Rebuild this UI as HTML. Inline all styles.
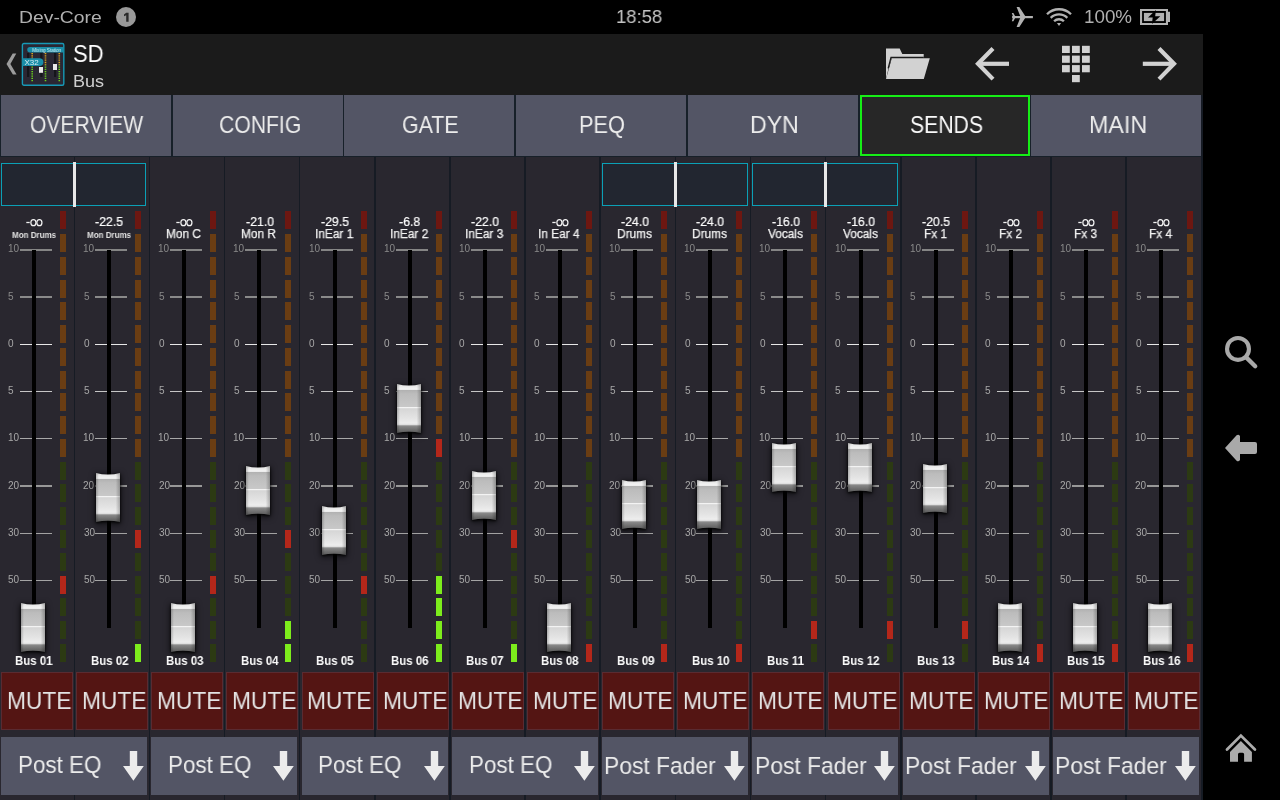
<!DOCTYPE html>
<html><head><meta charset="utf-8"><title>SD Bus Sends</title>
<style>
*{margin:0;padding:0;box-sizing:border-box}
html,body{width:1280px;height:800px;overflow:hidden;background:#000}
body{position:relative;font-family:"Liberation Sans",sans-serif;color:#fff}
.abs{position:absolute}
.t{position:absolute;white-space:nowrap;line-height:1;transform-origin:0 0;will-change:transform}
.tab{position:absolute;top:95px;height:61px;background:#535565}
.sep{position:absolute;width:1.5px;background:#161b24}
.seg{position:absolute;width:6px;height:18px}
.tick{position:absolute;height:1.4px}
.track{position:absolute;width:4px;background:#000}
.knob{position:absolute;width:30px;height:56px}
.mute{position:absolute;top:672px;height:58px;width:72px;background:#541513;box-shadow:inset 0 0 0 1px #5a2b31}
.post{position:absolute;top:737px;height:58px;width:146px;background:#535565}
.pan{position:absolute;top:162.6px;height:43.8px;border:1.7px solid #0ba0b6;background:#222630}
.panbar{position:absolute;top:162px;height:45px;width:3px;background:#e8e8e8}
svg{position:absolute;overflow:visible}
.kn{filter:drop-shadow(0 1px 1px rgba(0,0,0,0.9)) drop-shadow(0 1px 3px rgba(0,0,0,0.85))}
</style></head><body>
<svg width="0" height="0" style="position:absolute;left:0;top:0"><defs>
<linearGradient id="kg" x1="0" y1="0" x2="0" y2="1">
<stop offset="0" stop-color="#cfcfcf"/><stop offset="0.05" stop-color="#eaeaea"/><stop offset="0.11" stop-color="#f4f4f4"/>
<stop offset="0.13" stop-color="#b2b2b2"/><stop offset="0.2" stop-color="#bcbcbc"/><stop offset="0.46" stop-color="#c8c8c8"/>
<stop offset="0.48" stop-color="#f4f4f4"/><stop offset="0.505" stop-color="#d6d6d6"/>
<stop offset="0.7" stop-color="#e4e4e4"/><stop offset="0.8" stop-color="#ededed"/><stop offset="0.83" stop-color="#dedede"/><stop offset="0.855" stop-color="#8a8a8a"/>
<stop offset="0.93" stop-color="#707070"/><stop offset="1" stop-color="#5a5a5a"/></linearGradient>
<linearGradient id="kh" x1="0" y1="0" x2="1" y2="0">
<stop offset="0" stop-color="#000" stop-opacity="0.22"/><stop offset="0.12" stop-color="#000" stop-opacity="0"/>
<stop offset="0.82" stop-color="#000" stop-opacity="0"/><stop offset="1" stop-color="#000" stop-opacity="0.25"/></linearGradient>
<g id="knob"><path d="M0 0Q12 3 24 0V49Q12 46.5 0 49Z" fill="url(#kg)"/><path d="M0 0Q12 3 24 0V49Q12 46.5 0 49Z" fill="url(#kh)"/></g>
</defs></svg>

<div class="abs" style="left:0;top:0;width:1280px;height:34px;background:#000"></div>
<div class="t" style="left:19.01px;top:8.85px;font-size:17.19px;color:#b0b0b0;transform:scaleX(1.1263);">Dev-Core</div>
<div class="abs" style="left:116px;top:7px;width:20px;height:20px;border-radius:50%;background:#999"></div>
<svg style="left:0;top:0" width="140" height="30" viewBox="0 0 140 30"><path d="M126.2 12.7H128.6V21.7H126.2V15.3L124 16.3V14.6Z" fill="#2a2a2a"/></svg>
<div class="t" style="left:616.10px;top:6.87px;font-size:19.05px;color:#c4c4c4;transform:scaleX(0.9694);">18:58</div>
<div class="t" style="left:1083.57px;top:8.10px;font-size:18.19px;color:#b0b0b0;transform:scaleX(1.0336);">100%</div>
<div class="abs" style="left:0;top:34px;width:1203px;height:61px;background:#1b1b1b"></div>
<div class="t" style="left:73.38px;top:42.83px;font-size:23.35px;color:#fff;transform:scaleX(0.9450);">SD</div>
<div class="t" style="left:72.52px;top:73.42px;font-size:16.28px;color:#d0d0d0;transform:scaleX(1.1092);">Bus</div>
<div class="abs" style="left:0;top:95px;width:1203px;height:62px;background:#172029"></div>
<div class="tab" style="left:1px;width:170px"></div>
<div class="t" style="left:30.49px;top:112.97px;font-size:23.78px;color:#ececec;transform:scaleX(0.8860);">OVERVIEW</div>
<div class="tab" style="left:173px;width:170px"></div>
<div class="t" style="left:218.64px;top:112.97px;font-size:23.78px;color:#ececec;transform:scaleX(0.8903);">CONFIG</div>
<div class="tab" style="left:344px;width:170px"></div>
<div class="t" style="left:401.53px;top:112.97px;font-size:23.78px;color:#ececec;transform:scaleX(0.8999);">GATE</div>
<div class="tab" style="left:516px;width:170px"></div>
<div class="t" style="left:578.92px;top:112.97px;font-size:23.78px;color:#ececec;transform:scaleX(0.9150);">PEQ</div>
<div class="tab" style="left:688px;width:170px"></div>
<div class="t" style="left:750.11px;top:112.68px;font-size:24.13px;color:#ececec;transform:scaleX(0.9574);">DYN</div>
<div class="tab" style="left:860px;width:170px;background:#272727;border:2px solid #16ee16"></div>
<div class="t" style="left:909.92px;top:113.17px;font-size:23.78px;color:#fafafa;transform:scaleX(0.8926);">SENDS</div>
<div class="tab" style="left:1031px;width:170px"></div>
<div class="t" style="left:1088.59px;top:112.68px;font-size:24.13px;color:#ececec;transform:scaleX(0.9634);">MAIN</div>
<div class="abs" style="left:0;top:157px;width:1201px;height:643px;background:#29272f"></div>
<div class="abs" style="left:1201px;top:95px;width:2px;height:705px;background:#161b24"></div>
<div class="sep" style="left:73.50px;top:157px;height:580px"></div>
<div class="sep" style="left:73.50px;top:795px;height:5px"></div>
<div class="seg" style="left:60.00px;top:211.20px;background:#6d1711"></div>
<div class="seg" style="left:60.00px;top:233.97px;background:#6a3d13"></div>
<div class="seg" style="left:60.00px;top:256.74px;background:#6a3d13"></div>
<div class="seg" style="left:60.00px;top:279.51px;background:#6a3d13"></div>
<div class="seg" style="left:60.00px;top:302.28px;background:#6a3d13"></div>
<div class="seg" style="left:60.00px;top:325.05px;background:#6a3d13"></div>
<div class="seg" style="left:60.00px;top:347.82px;background:#6a3d13"></div>
<div class="seg" style="left:60.00px;top:370.59px;background:#6a3d13"></div>
<div class="seg" style="left:60.00px;top:393.36px;background:#6a3d13"></div>
<div class="seg" style="left:60.00px;top:416.13px;background:#6a3d13"></div>
<div class="seg" style="left:60.00px;top:438.90px;background:#6a3d13"></div>
<div class="seg" style="left:60.00px;top:461.67px;background:#2c3a13"></div>
<div class="seg" style="left:60.00px;top:484.44px;background:#2c3a13"></div>
<div class="seg" style="left:60.00px;top:507.21px;background:#2c3a13"></div>
<div class="seg" style="left:60.00px;top:529.98px;background:#2c3a13"></div>
<div class="seg" style="left:60.00px;top:552.75px;background:#2c3a13"></div>
<div class="seg" style="left:60.00px;top:575.52px;background:#b4271a"></div>
<div class="seg" style="left:60.00px;top:598.29px;background:#2c3a13"></div>
<div class="seg" style="left:60.00px;top:621.06px;background:#2c3a13"></div>
<div class="seg" style="left:60.00px;top:643.83px;background:#2c3a13"></div>
<div class="tick" style="left:20.00px;top:249.20px;width:32px;background:#858585"></div>
<div class="t" style="left:8.05px;top:244.34px;font-size:10.00px;color:#8a8a8a;transform:scaleX(0.9850);">10</div>
<div class="tick" style="left:20.00px;top:296.40px;width:32px;background:#8a8a8a"></div>
<div class="t" style="left:8.41px;top:291.54px;font-size:10.00px;color:#8a8a8a;transform:scaleX(0.9850);">5</div>
<div class="tick" style="left:20.00px;top:343.70px;width:32px;background:#e8e8e8"></div>
<div class="t" style="left:8.43px;top:338.83px;font-size:10.00px;color:#a8a8a8;transform:scaleX(0.9850);">0</div>
<div class="tick" style="left:20.00px;top:390.90px;width:32px;background:#c6c6c6"></div>
<div class="t" style="left:8.41px;top:386.04px;font-size:10.00px;color:#a8a8a8;transform:scaleX(0.9850);">5</div>
<div class="tick" style="left:20.00px;top:438.10px;width:32px;background:#a8a8a8"></div>
<div class="t" style="left:8.05px;top:433.24px;font-size:10.00px;color:#a8a8a8;transform:scaleX(0.9850);">10</div>
<div class="tick" style="left:20.00px;top:485.40px;width:32px;background:#989898"></div>
<div class="t" style="left:8.31px;top:480.54px;font-size:10.00px;color:#a8a8a8;transform:scaleX(0.9850);">20</div>
<div class="tick" style="left:20.00px;top:532.60px;width:32px;background:#a2a2a2"></div>
<div class="t" style="left:8.43px;top:527.73px;font-size:10.00px;color:#a8a8a8;transform:scaleX(0.9850);">30</div>
<div class="tick" style="left:20.00px;top:579.80px;width:32px;background:#a4a4a4"></div>
<div class="t" style="left:8.41px;top:574.93px;font-size:10.00px;color:#a8a8a8;transform:scaleX(0.9850);">50</div>
<div class="track" style="left:32.00px;top:250px;height:378px"></div>
<svg class="kn" style="left:21.00px;top:603.00px" width="24" height="49"><use href="#knob"/></svg>
<svg style="left:24.20px;top:216px" width="20" height="12" viewBox="0 0 20 12"><rect x="2.3" y="5.85" width="3.4" height="1.3" fill="#f0f0f0"/><ellipse cx="9.4" cy="6.65" rx="2.55" ry="3.05" fill="none" stroke="#f4f4f4" stroke-width="1.2"/><ellipse cx="15.4" cy="6.65" rx="2.55" ry="3.05" fill="none" stroke="#f4f4f4" stroke-width="1.2"/></svg>
<div class="t" style="left:12.02px;top:231.19px;font-size:8.87px;color:#e0e0e0;font-weight:bold;transform:scaleX(0.9050);">Mon Drums</div>
<div class="t" style="left:15.39px;top:654.96px;font-size:12.80px;color:#fafafa;font-weight:bold;transform:scaleX(0.8950);">Bus 01</div>
<div class="mute" style="left:1.00px"></div>
<div class="t" style="left:6.88px;top:688.58px;font-size:24.13px;color:#e4e4e4;transform:scaleX(0.9435);">MUTE</div>
<div class="sep" style="left:148.64px;top:157px;height:643px"></div>
<div class="seg" style="left:135.14px;top:211.20px;background:#6d1711"></div>
<div class="seg" style="left:135.14px;top:233.97px;background:#6a3d13"></div>
<div class="seg" style="left:135.14px;top:256.74px;background:#6a3d13"></div>
<div class="seg" style="left:135.14px;top:279.51px;background:#6a3d13"></div>
<div class="seg" style="left:135.14px;top:302.28px;background:#6a3d13"></div>
<div class="seg" style="left:135.14px;top:325.05px;background:#6a3d13"></div>
<div class="seg" style="left:135.14px;top:347.82px;background:#6a3d13"></div>
<div class="seg" style="left:135.14px;top:370.59px;background:#6a3d13"></div>
<div class="seg" style="left:135.14px;top:393.36px;background:#6a3d13"></div>
<div class="seg" style="left:135.14px;top:416.13px;background:#6a3d13"></div>
<div class="seg" style="left:135.14px;top:438.90px;background:#6a3d13"></div>
<div class="seg" style="left:135.14px;top:461.67px;background:#2c3a13"></div>
<div class="seg" style="left:135.14px;top:484.44px;background:#2c3a13"></div>
<div class="seg" style="left:135.14px;top:507.21px;background:#2c3a13"></div>
<div class="seg" style="left:135.14px;top:529.98px;background:#b4271a"></div>
<div class="seg" style="left:135.14px;top:552.75px;background:#2c3a13"></div>
<div class="seg" style="left:135.14px;top:575.52px;background:#2c3a13"></div>
<div class="seg" style="left:135.14px;top:598.29px;background:#2c3a13"></div>
<div class="seg" style="left:135.14px;top:621.06px;background:#2c3a13"></div>
<div class="seg" style="left:135.14px;top:643.83px;background:#7ded1c"></div>
<div class="tick" style="left:95.14px;top:249.20px;width:32px;background:#858585"></div>
<div class="t" style="left:83.19px;top:244.34px;font-size:10.00px;color:#8a8a8a;transform:scaleX(0.9850);">10</div>
<div class="tick" style="left:95.14px;top:296.40px;width:32px;background:#8a8a8a"></div>
<div class="t" style="left:83.55px;top:291.54px;font-size:10.00px;color:#8a8a8a;transform:scaleX(0.9850);">5</div>
<div class="tick" style="left:95.14px;top:343.70px;width:32px;background:#e8e8e8"></div>
<div class="t" style="left:83.57px;top:338.83px;font-size:10.00px;color:#a8a8a8;transform:scaleX(0.9850);">0</div>
<div class="tick" style="left:95.14px;top:390.90px;width:32px;background:#c6c6c6"></div>
<div class="t" style="left:83.55px;top:386.04px;font-size:10.00px;color:#a8a8a8;transform:scaleX(0.9850);">5</div>
<div class="tick" style="left:95.14px;top:438.10px;width:32px;background:#a8a8a8"></div>
<div class="t" style="left:83.19px;top:433.24px;font-size:10.00px;color:#a8a8a8;transform:scaleX(0.9850);">10</div>
<div class="tick" style="left:95.14px;top:485.40px;width:32px;background:#989898"></div>
<div class="t" style="left:83.45px;top:480.54px;font-size:10.00px;color:#a8a8a8;transform:scaleX(0.9850);">20</div>
<div class="tick" style="left:95.14px;top:532.60px;width:32px;background:#a2a2a2"></div>
<div class="t" style="left:83.57px;top:527.73px;font-size:10.00px;color:#a8a8a8;transform:scaleX(0.9850);">30</div>
<div class="tick" style="left:95.14px;top:579.80px;width:32px;background:#a4a4a4"></div>
<div class="t" style="left:83.55px;top:574.93px;font-size:10.00px;color:#a8a8a8;transform:scaleX(0.9850);">50</div>
<div class="track" style="left:107.14px;top:250px;height:378px"></div>
<svg class="kn" style="left:96.14px;top:473.40px" width="24" height="49"><use href="#knob"/></svg>
<div class="t" style="left:95.29px;top:215.52px;font-size:12.50px;color:#fff;transform:scaleX(0.9850);-webkit-text-stroke:0.2px #fff;">-22.5</div>
<div class="t" style="left:87.16px;top:231.19px;font-size:8.87px;color:#e0e0e0;font-weight:bold;transform:scaleX(0.9050);">Mon Drums</div>
<div class="t" style="left:90.60px;top:654.96px;font-size:12.80px;color:#fafafa;font-weight:bold;transform:scaleX(0.8950);">Bus 02</div>
<div class="mute" style="left:76.14px"></div>
<div class="t" style="left:82.02px;top:688.58px;font-size:24.13px;color:#e4e4e4;transform:scaleX(0.9435);">MUTE</div>
<div class="sep" style="left:223.78px;top:157px;height:580px"></div>
<div class="sep" style="left:223.78px;top:795px;height:5px"></div>
<div class="seg" style="left:210.28px;top:211.20px;background:#6d1711"></div>
<div class="seg" style="left:210.28px;top:233.97px;background:#6a3d13"></div>
<div class="seg" style="left:210.28px;top:256.74px;background:#6a3d13"></div>
<div class="seg" style="left:210.28px;top:279.51px;background:#6a3d13"></div>
<div class="seg" style="left:210.28px;top:302.28px;background:#6a3d13"></div>
<div class="seg" style="left:210.28px;top:325.05px;background:#6a3d13"></div>
<div class="seg" style="left:210.28px;top:347.82px;background:#6a3d13"></div>
<div class="seg" style="left:210.28px;top:370.59px;background:#6a3d13"></div>
<div class="seg" style="left:210.28px;top:393.36px;background:#6a3d13"></div>
<div class="seg" style="left:210.28px;top:416.13px;background:#6a3d13"></div>
<div class="seg" style="left:210.28px;top:438.90px;background:#6a3d13"></div>
<div class="seg" style="left:210.28px;top:461.67px;background:#2c3a13"></div>
<div class="seg" style="left:210.28px;top:484.44px;background:#2c3a13"></div>
<div class="seg" style="left:210.28px;top:507.21px;background:#2c3a13"></div>
<div class="seg" style="left:210.28px;top:529.98px;background:#2c3a13"></div>
<div class="seg" style="left:210.28px;top:552.75px;background:#2c3a13"></div>
<div class="seg" style="left:210.28px;top:575.52px;background:#b4271a"></div>
<div class="seg" style="left:210.28px;top:598.29px;background:#2c3a13"></div>
<div class="seg" style="left:210.28px;top:621.06px;background:#2c3a13"></div>
<div class="seg" style="left:210.28px;top:643.83px;background:#2c3a13"></div>
<div class="tick" style="left:170.28px;top:249.20px;width:32px;background:#858585"></div>
<div class="t" style="left:158.33px;top:244.34px;font-size:10.00px;color:#8a8a8a;transform:scaleX(0.9850);">10</div>
<div class="tick" style="left:170.28px;top:296.40px;width:32px;background:#8a8a8a"></div>
<div class="t" style="left:158.69px;top:291.54px;font-size:10.00px;color:#8a8a8a;transform:scaleX(0.9850);">5</div>
<div class="tick" style="left:170.28px;top:343.70px;width:32px;background:#e8e8e8"></div>
<div class="t" style="left:158.71px;top:338.83px;font-size:10.00px;color:#a8a8a8;transform:scaleX(0.9850);">0</div>
<div class="tick" style="left:170.28px;top:390.90px;width:32px;background:#c6c6c6"></div>
<div class="t" style="left:158.69px;top:386.04px;font-size:10.00px;color:#a8a8a8;transform:scaleX(0.9850);">5</div>
<div class="tick" style="left:170.28px;top:438.10px;width:32px;background:#a8a8a8"></div>
<div class="t" style="left:158.33px;top:433.24px;font-size:10.00px;color:#a8a8a8;transform:scaleX(0.9850);">10</div>
<div class="tick" style="left:170.28px;top:485.40px;width:32px;background:#989898"></div>
<div class="t" style="left:158.59px;top:480.54px;font-size:10.00px;color:#a8a8a8;transform:scaleX(0.9850);">20</div>
<div class="tick" style="left:170.28px;top:532.60px;width:32px;background:#a2a2a2"></div>
<div class="t" style="left:158.71px;top:527.73px;font-size:10.00px;color:#a8a8a8;transform:scaleX(0.9850);">30</div>
<div class="tick" style="left:170.28px;top:579.80px;width:32px;background:#a4a4a4"></div>
<div class="t" style="left:158.69px;top:574.93px;font-size:10.00px;color:#a8a8a8;transform:scaleX(0.9850);">50</div>
<div class="track" style="left:182.28px;top:250px;height:378px"></div>
<svg class="kn" style="left:171.28px;top:603.00px" width="24" height="49"><use href="#knob"/></svg>
<svg style="left:174.48px;top:216px" width="20" height="12" viewBox="0 0 20 12"><rect x="2.3" y="5.85" width="3.4" height="1.3" fill="#f0f0f0"/><ellipse cx="9.4" cy="6.65" rx="2.55" ry="3.05" fill="none" stroke="#f4f4f4" stroke-width="1.2"/><ellipse cx="15.4" cy="6.65" rx="2.55" ry="3.05" fill="none" stroke="#f4f4f4" stroke-width="1.2"/></svg>
<div class="t" style="left:166.20px;top:227.89px;font-size:12.65px;color:#f2f2f2;transform:scaleX(0.9400);-webkit-text-stroke:0.25px #f2f2f2;">Mon C</div>
<div class="t" style="left:165.72px;top:654.96px;font-size:12.80px;color:#fafafa;font-weight:bold;transform:scaleX(0.8950);">Bus 03</div>
<div class="mute" style="left:151.28px"></div>
<div class="t" style="left:157.16px;top:688.58px;font-size:24.13px;color:#e4e4e4;transform:scaleX(0.9435);">MUTE</div>
<div class="sep" style="left:298.92px;top:157px;height:643px"></div>
<div class="seg" style="left:285.42px;top:211.20px;background:#6d1711"></div>
<div class="seg" style="left:285.42px;top:233.97px;background:#6a3d13"></div>
<div class="seg" style="left:285.42px;top:256.74px;background:#6a3d13"></div>
<div class="seg" style="left:285.42px;top:279.51px;background:#6a3d13"></div>
<div class="seg" style="left:285.42px;top:302.28px;background:#6a3d13"></div>
<div class="seg" style="left:285.42px;top:325.05px;background:#6a3d13"></div>
<div class="seg" style="left:285.42px;top:347.82px;background:#6a3d13"></div>
<div class="seg" style="left:285.42px;top:370.59px;background:#6a3d13"></div>
<div class="seg" style="left:285.42px;top:393.36px;background:#6a3d13"></div>
<div class="seg" style="left:285.42px;top:416.13px;background:#6a3d13"></div>
<div class="seg" style="left:285.42px;top:438.90px;background:#6a3d13"></div>
<div class="seg" style="left:285.42px;top:461.67px;background:#2c3a13"></div>
<div class="seg" style="left:285.42px;top:484.44px;background:#2c3a13"></div>
<div class="seg" style="left:285.42px;top:507.21px;background:#2c3a13"></div>
<div class="seg" style="left:285.42px;top:529.98px;background:#b4271a"></div>
<div class="seg" style="left:285.42px;top:552.75px;background:#2c3a13"></div>
<div class="seg" style="left:285.42px;top:575.52px;background:#2c3a13"></div>
<div class="seg" style="left:285.42px;top:598.29px;background:#2c3a13"></div>
<div class="seg" style="left:285.42px;top:621.06px;background:#7ded1c"></div>
<div class="seg" style="left:285.42px;top:643.83px;background:#7ded1c"></div>
<div class="tick" style="left:245.42px;top:249.20px;width:32px;background:#858585"></div>
<div class="t" style="left:233.47px;top:244.34px;font-size:10.00px;color:#8a8a8a;transform:scaleX(0.9850);">10</div>
<div class="tick" style="left:245.42px;top:296.40px;width:32px;background:#8a8a8a"></div>
<div class="t" style="left:233.83px;top:291.54px;font-size:10.00px;color:#8a8a8a;transform:scaleX(0.9850);">5</div>
<div class="tick" style="left:245.42px;top:343.70px;width:32px;background:#e8e8e8"></div>
<div class="t" style="left:233.85px;top:338.83px;font-size:10.00px;color:#a8a8a8;transform:scaleX(0.9850);">0</div>
<div class="tick" style="left:245.42px;top:390.90px;width:32px;background:#c6c6c6"></div>
<div class="t" style="left:233.83px;top:386.04px;font-size:10.00px;color:#a8a8a8;transform:scaleX(0.9850);">5</div>
<div class="tick" style="left:245.42px;top:438.10px;width:32px;background:#a8a8a8"></div>
<div class="t" style="left:233.47px;top:433.24px;font-size:10.00px;color:#a8a8a8;transform:scaleX(0.9850);">10</div>
<div class="tick" style="left:245.42px;top:485.40px;width:32px;background:#989898"></div>
<div class="t" style="left:233.73px;top:480.54px;font-size:10.00px;color:#a8a8a8;transform:scaleX(0.9850);">20</div>
<div class="tick" style="left:245.42px;top:532.60px;width:32px;background:#a2a2a2"></div>
<div class="t" style="left:233.85px;top:527.73px;font-size:10.00px;color:#a8a8a8;transform:scaleX(0.9850);">30</div>
<div class="tick" style="left:245.42px;top:579.80px;width:32px;background:#a4a4a4"></div>
<div class="t" style="left:233.83px;top:574.93px;font-size:10.00px;color:#a8a8a8;transform:scaleX(0.9850);">50</div>
<div class="track" style="left:257.42px;top:250px;height:378px"></div>
<svg class="kn" style="left:246.42px;top:466.32px" width="24" height="49"><use href="#knob"/></svg>
<div class="t" style="left:245.55px;top:215.52px;font-size:12.50px;color:#fff;transform:scaleX(0.9850);-webkit-text-stroke:0.2px #fff;">-21.0</div>
<div class="t" style="left:241.39px;top:227.89px;font-size:12.65px;color:#f2f2f2;transform:scaleX(0.9400);-webkit-text-stroke:0.25px #f2f2f2;">Mon R</div>
<div class="t" style="left:240.69px;top:654.96px;font-size:12.80px;color:#fafafa;font-weight:bold;transform:scaleX(0.8950);">Bus 04</div>
<div class="mute" style="left:226.42px"></div>
<div class="t" style="left:232.30px;top:688.58px;font-size:24.13px;color:#e4e4e4;transform:scaleX(0.9435);">MUTE</div>
<div class="sep" style="left:374.06px;top:157px;height:580px"></div>
<div class="sep" style="left:374.06px;top:795px;height:5px"></div>
<div class="seg" style="left:360.56px;top:211.20px;background:#6d1711"></div>
<div class="seg" style="left:360.56px;top:233.97px;background:#6a3d13"></div>
<div class="seg" style="left:360.56px;top:256.74px;background:#6a3d13"></div>
<div class="seg" style="left:360.56px;top:279.51px;background:#6a3d13"></div>
<div class="seg" style="left:360.56px;top:302.28px;background:#6a3d13"></div>
<div class="seg" style="left:360.56px;top:325.05px;background:#6a3d13"></div>
<div class="seg" style="left:360.56px;top:347.82px;background:#6a3d13"></div>
<div class="seg" style="left:360.56px;top:370.59px;background:#6a3d13"></div>
<div class="seg" style="left:360.56px;top:393.36px;background:#6a3d13"></div>
<div class="seg" style="left:360.56px;top:416.13px;background:#6a3d13"></div>
<div class="seg" style="left:360.56px;top:438.90px;background:#6a3d13"></div>
<div class="seg" style="left:360.56px;top:461.67px;background:#2c3a13"></div>
<div class="seg" style="left:360.56px;top:484.44px;background:#2c3a13"></div>
<div class="seg" style="left:360.56px;top:507.21px;background:#2c3a13"></div>
<div class="seg" style="left:360.56px;top:529.98px;background:#2c3a13"></div>
<div class="seg" style="left:360.56px;top:552.75px;background:#2c3a13"></div>
<div class="seg" style="left:360.56px;top:575.52px;background:#b4271a"></div>
<div class="seg" style="left:360.56px;top:598.29px;background:#2c3a13"></div>
<div class="seg" style="left:360.56px;top:621.06px;background:#2c3a13"></div>
<div class="seg" style="left:360.56px;top:643.83px;background:#2c3a13"></div>
<div class="tick" style="left:320.56px;top:249.20px;width:32px;background:#858585"></div>
<div class="t" style="left:308.61px;top:244.34px;font-size:10.00px;color:#8a8a8a;transform:scaleX(0.9850);">10</div>
<div class="tick" style="left:320.56px;top:296.40px;width:32px;background:#8a8a8a"></div>
<div class="t" style="left:308.97px;top:291.54px;font-size:10.00px;color:#8a8a8a;transform:scaleX(0.9850);">5</div>
<div class="tick" style="left:320.56px;top:343.70px;width:32px;background:#e8e8e8"></div>
<div class="t" style="left:308.99px;top:338.83px;font-size:10.00px;color:#a8a8a8;transform:scaleX(0.9850);">0</div>
<div class="tick" style="left:320.56px;top:390.90px;width:32px;background:#c6c6c6"></div>
<div class="t" style="left:308.97px;top:386.04px;font-size:10.00px;color:#a8a8a8;transform:scaleX(0.9850);">5</div>
<div class="tick" style="left:320.56px;top:438.10px;width:32px;background:#a8a8a8"></div>
<div class="t" style="left:308.61px;top:433.24px;font-size:10.00px;color:#a8a8a8;transform:scaleX(0.9850);">10</div>
<div class="tick" style="left:320.56px;top:485.40px;width:32px;background:#989898"></div>
<div class="t" style="left:308.87px;top:480.54px;font-size:10.00px;color:#a8a8a8;transform:scaleX(0.9850);">20</div>
<div class="tick" style="left:320.56px;top:532.60px;width:32px;background:#a2a2a2"></div>
<div class="t" style="left:308.99px;top:527.73px;font-size:10.00px;color:#a8a8a8;transform:scaleX(0.9850);">30</div>
<div class="tick" style="left:320.56px;top:579.80px;width:32px;background:#a4a4a4"></div>
<div class="t" style="left:308.97px;top:574.93px;font-size:10.00px;color:#a8a8a8;transform:scaleX(0.9850);">50</div>
<div class="track" style="left:332.56px;top:250px;height:378px"></div>
<svg class="kn" style="left:321.56px;top:506.44px" width="24" height="49"><use href="#knob"/></svg>
<div class="t" style="left:320.71px;top:215.52px;font-size:12.50px;color:#fff;transform:scaleX(0.9850);-webkit-text-stroke:0.2px #fff;">-29.5</div>
<div class="t" style="left:314.83px;top:227.89px;font-size:12.65px;color:#f2f2f2;transform:scaleX(0.9400);-webkit-text-stroke:0.25px #f2f2f2;">InEar 1</div>
<div class="t" style="left:315.95px;top:654.96px;font-size:12.80px;color:#fafafa;font-weight:bold;transform:scaleX(0.8950);">Bus 05</div>
<div class="mute" style="left:301.56px"></div>
<div class="t" style="left:307.44px;top:688.58px;font-size:24.13px;color:#e4e4e4;transform:scaleX(0.9435);">MUTE</div>
<div class="sep" style="left:449.20px;top:157px;height:643px"></div>
<div class="seg" style="left:435.70px;top:211.20px;background:#6d1711"></div>
<div class="seg" style="left:435.70px;top:233.97px;background:#6a3d13"></div>
<div class="seg" style="left:435.70px;top:256.74px;background:#6a3d13"></div>
<div class="seg" style="left:435.70px;top:279.51px;background:#6a3d13"></div>
<div class="seg" style="left:435.70px;top:302.28px;background:#6a3d13"></div>
<div class="seg" style="left:435.70px;top:325.05px;background:#6a3d13"></div>
<div class="seg" style="left:435.70px;top:347.82px;background:#6a3d13"></div>
<div class="seg" style="left:435.70px;top:370.59px;background:#6a3d13"></div>
<div class="seg" style="left:435.70px;top:393.36px;background:#6a3d13"></div>
<div class="seg" style="left:435.70px;top:416.13px;background:#6a3d13"></div>
<div class="seg" style="left:435.70px;top:438.90px;background:#b4271a"></div>
<div class="seg" style="left:435.70px;top:461.67px;background:#2c3a13"></div>
<div class="seg" style="left:435.70px;top:484.44px;background:#2c3a13"></div>
<div class="seg" style="left:435.70px;top:507.21px;background:#2c3a13"></div>
<div class="seg" style="left:435.70px;top:529.98px;background:#2c3a13"></div>
<div class="seg" style="left:435.70px;top:552.75px;background:#2c3a13"></div>
<div class="seg" style="left:435.70px;top:575.52px;background:#7ded1c"></div>
<div class="seg" style="left:435.70px;top:598.29px;background:#7ded1c"></div>
<div class="seg" style="left:435.70px;top:621.06px;background:#7ded1c"></div>
<div class="seg" style="left:435.70px;top:643.83px;background:#7ded1c"></div>
<div class="tick" style="left:395.70px;top:249.20px;width:32px;background:#858585"></div>
<div class="t" style="left:383.75px;top:244.34px;font-size:10.00px;color:#8a8a8a;transform:scaleX(0.9850);">10</div>
<div class="tick" style="left:395.70px;top:296.40px;width:32px;background:#8a8a8a"></div>
<div class="t" style="left:384.11px;top:291.54px;font-size:10.00px;color:#8a8a8a;transform:scaleX(0.9850);">5</div>
<div class="tick" style="left:395.70px;top:343.70px;width:32px;background:#e8e8e8"></div>
<div class="t" style="left:384.13px;top:338.83px;font-size:10.00px;color:#a8a8a8;transform:scaleX(0.9850);">0</div>
<div class="tick" style="left:395.70px;top:390.90px;width:32px;background:#c6c6c6"></div>
<div class="t" style="left:384.11px;top:386.04px;font-size:10.00px;color:#a8a8a8;transform:scaleX(0.9850);">5</div>
<div class="tick" style="left:395.70px;top:438.10px;width:32px;background:#a8a8a8"></div>
<div class="t" style="left:383.75px;top:433.24px;font-size:10.00px;color:#a8a8a8;transform:scaleX(0.9850);">10</div>
<div class="tick" style="left:395.70px;top:485.40px;width:32px;background:#989898"></div>
<div class="t" style="left:384.01px;top:480.54px;font-size:10.00px;color:#a8a8a8;transform:scaleX(0.9850);">20</div>
<div class="tick" style="left:395.70px;top:532.60px;width:32px;background:#a2a2a2"></div>
<div class="t" style="left:384.13px;top:527.73px;font-size:10.00px;color:#a8a8a8;transform:scaleX(0.9850);">30</div>
<div class="tick" style="left:395.70px;top:579.80px;width:32px;background:#a4a4a4"></div>
<div class="t" style="left:384.11px;top:574.93px;font-size:10.00px;color:#a8a8a8;transform:scaleX(0.9850);">50</div>
<div class="track" style="left:407.70px;top:250px;height:378px"></div>
<svg class="kn" style="left:396.70px;top:384.09px" width="24" height="49"><use href="#knob"/></svg>
<div class="t" style="left:399.29px;top:215.52px;font-size:12.50px;color:#fff;transform:scaleX(0.9850);-webkit-text-stroke:0.2px #fff;">-6.8</div>
<div class="t" style="left:389.98px;top:227.89px;font-size:12.65px;color:#f2f2f2;transform:scaleX(0.9400);-webkit-text-stroke:0.25px #f2f2f2;">InEar 2</div>
<div class="t" style="left:391.14px;top:654.96px;font-size:12.80px;color:#fafafa;font-weight:bold;transform:scaleX(0.8950);">Bus 06</div>
<div class="mute" style="left:376.70px"></div>
<div class="t" style="left:382.58px;top:688.58px;font-size:24.13px;color:#e4e4e4;transform:scaleX(0.9435);">MUTE</div>
<div class="sep" style="left:524.34px;top:157px;height:580px"></div>
<div class="sep" style="left:524.34px;top:795px;height:5px"></div>
<div class="seg" style="left:510.84px;top:211.20px;background:#6d1711"></div>
<div class="seg" style="left:510.84px;top:233.97px;background:#6a3d13"></div>
<div class="seg" style="left:510.84px;top:256.74px;background:#6a3d13"></div>
<div class="seg" style="left:510.84px;top:279.51px;background:#6a3d13"></div>
<div class="seg" style="left:510.84px;top:302.28px;background:#6a3d13"></div>
<div class="seg" style="left:510.84px;top:325.05px;background:#6a3d13"></div>
<div class="seg" style="left:510.84px;top:347.82px;background:#6a3d13"></div>
<div class="seg" style="left:510.84px;top:370.59px;background:#6a3d13"></div>
<div class="seg" style="left:510.84px;top:393.36px;background:#6a3d13"></div>
<div class="seg" style="left:510.84px;top:416.13px;background:#6a3d13"></div>
<div class="seg" style="left:510.84px;top:438.90px;background:#6a3d13"></div>
<div class="seg" style="left:510.84px;top:461.67px;background:#2c3a13"></div>
<div class="seg" style="left:510.84px;top:484.44px;background:#2c3a13"></div>
<div class="seg" style="left:510.84px;top:507.21px;background:#2c3a13"></div>
<div class="seg" style="left:510.84px;top:529.98px;background:#b4271a"></div>
<div class="seg" style="left:510.84px;top:552.75px;background:#2c3a13"></div>
<div class="seg" style="left:510.84px;top:575.52px;background:#2c3a13"></div>
<div class="seg" style="left:510.84px;top:598.29px;background:#2c3a13"></div>
<div class="seg" style="left:510.84px;top:621.06px;background:#2c3a13"></div>
<div class="seg" style="left:510.84px;top:643.83px;background:#7ded1c"></div>
<div class="tick" style="left:470.84px;top:249.20px;width:32px;background:#858585"></div>
<div class="t" style="left:458.89px;top:244.34px;font-size:10.00px;color:#8a8a8a;transform:scaleX(0.9850);">10</div>
<div class="tick" style="left:470.84px;top:296.40px;width:32px;background:#8a8a8a"></div>
<div class="t" style="left:459.25px;top:291.54px;font-size:10.00px;color:#8a8a8a;transform:scaleX(0.9850);">5</div>
<div class="tick" style="left:470.84px;top:343.70px;width:32px;background:#e8e8e8"></div>
<div class="t" style="left:459.27px;top:338.83px;font-size:10.00px;color:#a8a8a8;transform:scaleX(0.9850);">0</div>
<div class="tick" style="left:470.84px;top:390.90px;width:32px;background:#c6c6c6"></div>
<div class="t" style="left:459.25px;top:386.04px;font-size:10.00px;color:#a8a8a8;transform:scaleX(0.9850);">5</div>
<div class="tick" style="left:470.84px;top:438.10px;width:32px;background:#a8a8a8"></div>
<div class="t" style="left:458.89px;top:433.24px;font-size:10.00px;color:#a8a8a8;transform:scaleX(0.9850);">10</div>
<div class="tick" style="left:470.84px;top:485.40px;width:32px;background:#989898"></div>
<div class="t" style="left:459.15px;top:480.54px;font-size:10.00px;color:#a8a8a8;transform:scaleX(0.9850);">20</div>
<div class="tick" style="left:470.84px;top:532.60px;width:32px;background:#a2a2a2"></div>
<div class="t" style="left:459.27px;top:527.73px;font-size:10.00px;color:#a8a8a8;transform:scaleX(0.9850);">30</div>
<div class="tick" style="left:470.84px;top:579.80px;width:32px;background:#a4a4a4"></div>
<div class="t" style="left:459.25px;top:574.93px;font-size:10.00px;color:#a8a8a8;transform:scaleX(0.9850);">50</div>
<div class="track" style="left:482.84px;top:250px;height:378px"></div>
<svg class="kn" style="left:471.84px;top:471.04px" width="24" height="49"><use href="#knob"/></svg>
<div class="t" style="left:470.97px;top:215.52px;font-size:12.50px;color:#fff;transform:scaleX(0.9850);-webkit-text-stroke:0.2px #fff;">-22.0</div>
<div class="t" style="left:465.09px;top:227.89px;font-size:12.65px;color:#f2f2f2;transform:scaleX(0.9400);-webkit-text-stroke:0.25px #f2f2f2;">InEar 3</div>
<div class="t" style="left:466.33px;top:654.96px;font-size:12.80px;color:#fafafa;font-weight:bold;transform:scaleX(0.8950);">Bus 07</div>
<div class="mute" style="left:451.84px"></div>
<div class="t" style="left:457.72px;top:688.58px;font-size:24.13px;color:#e4e4e4;transform:scaleX(0.9435);">MUTE</div>
<div class="sep" style="left:599.48px;top:157px;height:643px"></div>
<div class="seg" style="left:585.98px;top:211.20px;background:#6d1711"></div>
<div class="seg" style="left:585.98px;top:233.97px;background:#6a3d13"></div>
<div class="seg" style="left:585.98px;top:256.74px;background:#6a3d13"></div>
<div class="seg" style="left:585.98px;top:279.51px;background:#6a3d13"></div>
<div class="seg" style="left:585.98px;top:302.28px;background:#6a3d13"></div>
<div class="seg" style="left:585.98px;top:325.05px;background:#6a3d13"></div>
<div class="seg" style="left:585.98px;top:347.82px;background:#6a3d13"></div>
<div class="seg" style="left:585.98px;top:370.59px;background:#6a3d13"></div>
<div class="seg" style="left:585.98px;top:393.36px;background:#6a3d13"></div>
<div class="seg" style="left:585.98px;top:416.13px;background:#6a3d13"></div>
<div class="seg" style="left:585.98px;top:438.90px;background:#6a3d13"></div>
<div class="seg" style="left:585.98px;top:461.67px;background:#2c3a13"></div>
<div class="seg" style="left:585.98px;top:484.44px;background:#2c3a13"></div>
<div class="seg" style="left:585.98px;top:507.21px;background:#2c3a13"></div>
<div class="seg" style="left:585.98px;top:529.98px;background:#2c3a13"></div>
<div class="seg" style="left:585.98px;top:552.75px;background:#2c3a13"></div>
<div class="seg" style="left:585.98px;top:575.52px;background:#2c3a13"></div>
<div class="seg" style="left:585.98px;top:598.29px;background:#2c3a13"></div>
<div class="seg" style="left:585.98px;top:621.06px;background:#2c3a13"></div>
<div class="seg" style="left:585.98px;top:643.83px;background:#b4271a"></div>
<div class="tick" style="left:545.98px;top:249.20px;width:32px;background:#858585"></div>
<div class="t" style="left:534.03px;top:244.34px;font-size:10.00px;color:#8a8a8a;transform:scaleX(0.9850);">10</div>
<div class="tick" style="left:545.98px;top:296.40px;width:32px;background:#8a8a8a"></div>
<div class="t" style="left:534.39px;top:291.54px;font-size:10.00px;color:#8a8a8a;transform:scaleX(0.9850);">5</div>
<div class="tick" style="left:545.98px;top:343.70px;width:32px;background:#e8e8e8"></div>
<div class="t" style="left:534.41px;top:338.83px;font-size:10.00px;color:#a8a8a8;transform:scaleX(0.9850);">0</div>
<div class="tick" style="left:545.98px;top:390.90px;width:32px;background:#c6c6c6"></div>
<div class="t" style="left:534.39px;top:386.04px;font-size:10.00px;color:#a8a8a8;transform:scaleX(0.9850);">5</div>
<div class="tick" style="left:545.98px;top:438.10px;width:32px;background:#a8a8a8"></div>
<div class="t" style="left:534.03px;top:433.24px;font-size:10.00px;color:#a8a8a8;transform:scaleX(0.9850);">10</div>
<div class="tick" style="left:545.98px;top:485.40px;width:32px;background:#989898"></div>
<div class="t" style="left:534.29px;top:480.54px;font-size:10.00px;color:#a8a8a8;transform:scaleX(0.9850);">20</div>
<div class="tick" style="left:545.98px;top:532.60px;width:32px;background:#a2a2a2"></div>
<div class="t" style="left:534.41px;top:527.73px;font-size:10.00px;color:#a8a8a8;transform:scaleX(0.9850);">30</div>
<div class="tick" style="left:545.98px;top:579.80px;width:32px;background:#a4a4a4"></div>
<div class="t" style="left:534.39px;top:574.93px;font-size:10.00px;color:#a8a8a8;transform:scaleX(0.9850);">50</div>
<div class="track" style="left:557.98px;top:250px;height:378px"></div>
<svg class="kn" style="left:546.98px;top:603.00px" width="24" height="49"><use href="#knob"/></svg>
<svg style="left:550.18px;top:216px" width="20" height="12" viewBox="0 0 20 12"><rect x="2.3" y="5.85" width="3.4" height="1.3" fill="#f0f0f0"/><ellipse cx="9.4" cy="6.65" rx="2.55" ry="3.05" fill="none" stroke="#f4f4f4" stroke-width="1.2"/><ellipse cx="15.4" cy="6.65" rx="2.55" ry="3.05" fill="none" stroke="#f4f4f4" stroke-width="1.2"/></svg>
<div class="t" style="left:538.48px;top:227.89px;font-size:12.65px;color:#f2f2f2;transform:scaleX(0.9400);-webkit-text-stroke:0.25px #f2f2f2;">In Ear 4</div>
<div class="t" style="left:541.39px;top:654.96px;font-size:12.80px;color:#fafafa;font-weight:bold;transform:scaleX(0.8950);">Bus 08</div>
<div class="mute" style="left:526.98px"></div>
<div class="t" style="left:532.86px;top:688.58px;font-size:24.13px;color:#e4e4e4;transform:scaleX(0.9435);">MUTE</div>
<div class="sep" style="left:674.62px;top:157px;height:580px"></div>
<div class="sep" style="left:674.62px;top:795px;height:5px"></div>
<div class="seg" style="left:661.12px;top:211.20px;background:#6d1711"></div>
<div class="seg" style="left:661.12px;top:233.97px;background:#6a3d13"></div>
<div class="seg" style="left:661.12px;top:256.74px;background:#6a3d13"></div>
<div class="seg" style="left:661.12px;top:279.51px;background:#6a3d13"></div>
<div class="seg" style="left:661.12px;top:302.28px;background:#6a3d13"></div>
<div class="seg" style="left:661.12px;top:325.05px;background:#6a3d13"></div>
<div class="seg" style="left:661.12px;top:347.82px;background:#6a3d13"></div>
<div class="seg" style="left:661.12px;top:370.59px;background:#6a3d13"></div>
<div class="seg" style="left:661.12px;top:393.36px;background:#6a3d13"></div>
<div class="seg" style="left:661.12px;top:416.13px;background:#6a3d13"></div>
<div class="seg" style="left:661.12px;top:438.90px;background:#6a3d13"></div>
<div class="seg" style="left:661.12px;top:461.67px;background:#2c3a13"></div>
<div class="seg" style="left:661.12px;top:484.44px;background:#2c3a13"></div>
<div class="seg" style="left:661.12px;top:507.21px;background:#2c3a13"></div>
<div class="seg" style="left:661.12px;top:529.98px;background:#2c3a13"></div>
<div class="seg" style="left:661.12px;top:552.75px;background:#2c3a13"></div>
<div class="seg" style="left:661.12px;top:575.52px;background:#2c3a13"></div>
<div class="seg" style="left:661.12px;top:598.29px;background:#2c3a13"></div>
<div class="seg" style="left:661.12px;top:621.06px;background:#2c3a13"></div>
<div class="seg" style="left:661.12px;top:643.83px;background:#b4271a"></div>
<div class="tick" style="left:621.12px;top:249.20px;width:32px;background:#858585"></div>
<div class="t" style="left:609.17px;top:244.34px;font-size:10.00px;color:#8a8a8a;transform:scaleX(0.9850);">10</div>
<div class="tick" style="left:621.12px;top:296.40px;width:32px;background:#8a8a8a"></div>
<div class="t" style="left:609.53px;top:291.54px;font-size:10.00px;color:#8a8a8a;transform:scaleX(0.9850);">5</div>
<div class="tick" style="left:621.12px;top:343.70px;width:32px;background:#e8e8e8"></div>
<div class="t" style="left:609.55px;top:338.83px;font-size:10.00px;color:#a8a8a8;transform:scaleX(0.9850);">0</div>
<div class="tick" style="left:621.12px;top:390.90px;width:32px;background:#c6c6c6"></div>
<div class="t" style="left:609.53px;top:386.04px;font-size:10.00px;color:#a8a8a8;transform:scaleX(0.9850);">5</div>
<div class="tick" style="left:621.12px;top:438.10px;width:32px;background:#a8a8a8"></div>
<div class="t" style="left:609.17px;top:433.24px;font-size:10.00px;color:#a8a8a8;transform:scaleX(0.9850);">10</div>
<div class="tick" style="left:621.12px;top:485.40px;width:32px;background:#989898"></div>
<div class="t" style="left:609.43px;top:480.54px;font-size:10.00px;color:#a8a8a8;transform:scaleX(0.9850);">20</div>
<div class="tick" style="left:621.12px;top:532.60px;width:32px;background:#a2a2a2"></div>
<div class="t" style="left:609.55px;top:527.73px;font-size:10.00px;color:#a8a8a8;transform:scaleX(0.9850);">30</div>
<div class="tick" style="left:621.12px;top:579.80px;width:32px;background:#a4a4a4"></div>
<div class="t" style="left:609.53px;top:574.93px;font-size:10.00px;color:#a8a8a8;transform:scaleX(0.9850);">50</div>
<div class="track" style="left:633.12px;top:250px;height:378px"></div>
<svg class="kn" style="left:622.12px;top:480.48px" width="24" height="49"><use href="#knob"/></svg>
<div class="t" style="left:621.25px;top:215.52px;font-size:12.50px;color:#fff;transform:scaleX(0.9850);-webkit-text-stroke:0.2px #fff;">-24.0</div>
<div class="t" style="left:617.04px;top:227.89px;font-size:12.65px;color:#f2f2f2;transform:scaleX(0.9400);-webkit-text-stroke:0.25px #f2f2f2;">Drums</div>
<div class="t" style="left:616.56px;top:654.96px;font-size:12.80px;color:#fafafa;font-weight:bold;transform:scaleX(0.8950);">Bus 09</div>
<div class="mute" style="left:602.12px"></div>
<div class="t" style="left:608.00px;top:688.58px;font-size:24.13px;color:#e4e4e4;transform:scaleX(0.9435);">MUTE</div>
<div class="sep" style="left:749.76px;top:157px;height:643px"></div>
<div class="seg" style="left:736.26px;top:211.20px;background:#6d1711"></div>
<div class="seg" style="left:736.26px;top:233.97px;background:#6a3d13"></div>
<div class="seg" style="left:736.26px;top:256.74px;background:#6a3d13"></div>
<div class="seg" style="left:736.26px;top:279.51px;background:#6a3d13"></div>
<div class="seg" style="left:736.26px;top:302.28px;background:#6a3d13"></div>
<div class="seg" style="left:736.26px;top:325.05px;background:#6a3d13"></div>
<div class="seg" style="left:736.26px;top:347.82px;background:#6a3d13"></div>
<div class="seg" style="left:736.26px;top:370.59px;background:#6a3d13"></div>
<div class="seg" style="left:736.26px;top:393.36px;background:#6a3d13"></div>
<div class="seg" style="left:736.26px;top:416.13px;background:#6a3d13"></div>
<div class="seg" style="left:736.26px;top:438.90px;background:#6a3d13"></div>
<div class="seg" style="left:736.26px;top:461.67px;background:#2c3a13"></div>
<div class="seg" style="left:736.26px;top:484.44px;background:#2c3a13"></div>
<div class="seg" style="left:736.26px;top:507.21px;background:#2c3a13"></div>
<div class="seg" style="left:736.26px;top:529.98px;background:#2c3a13"></div>
<div class="seg" style="left:736.26px;top:552.75px;background:#2c3a13"></div>
<div class="seg" style="left:736.26px;top:575.52px;background:#2c3a13"></div>
<div class="seg" style="left:736.26px;top:598.29px;background:#2c3a13"></div>
<div class="seg" style="left:736.26px;top:621.06px;background:#2c3a13"></div>
<div class="seg" style="left:736.26px;top:643.83px;background:#b4271a"></div>
<div class="tick" style="left:696.26px;top:249.20px;width:32px;background:#858585"></div>
<div class="t" style="left:684.31px;top:244.34px;font-size:10.00px;color:#8a8a8a;transform:scaleX(0.9850);">10</div>
<div class="tick" style="left:696.26px;top:296.40px;width:32px;background:#8a8a8a"></div>
<div class="t" style="left:684.67px;top:291.54px;font-size:10.00px;color:#8a8a8a;transform:scaleX(0.9850);">5</div>
<div class="tick" style="left:696.26px;top:343.70px;width:32px;background:#e8e8e8"></div>
<div class="t" style="left:684.69px;top:338.83px;font-size:10.00px;color:#a8a8a8;transform:scaleX(0.9850);">0</div>
<div class="tick" style="left:696.26px;top:390.90px;width:32px;background:#c6c6c6"></div>
<div class="t" style="left:684.67px;top:386.04px;font-size:10.00px;color:#a8a8a8;transform:scaleX(0.9850);">5</div>
<div class="tick" style="left:696.26px;top:438.10px;width:32px;background:#a8a8a8"></div>
<div class="t" style="left:684.31px;top:433.24px;font-size:10.00px;color:#a8a8a8;transform:scaleX(0.9850);">10</div>
<div class="tick" style="left:696.26px;top:485.40px;width:32px;background:#989898"></div>
<div class="t" style="left:684.57px;top:480.54px;font-size:10.00px;color:#a8a8a8;transform:scaleX(0.9850);">20</div>
<div class="tick" style="left:696.26px;top:532.60px;width:32px;background:#a2a2a2"></div>
<div class="t" style="left:684.69px;top:527.73px;font-size:10.00px;color:#a8a8a8;transform:scaleX(0.9850);">30</div>
<div class="tick" style="left:696.26px;top:579.80px;width:32px;background:#a4a4a4"></div>
<div class="t" style="left:684.67px;top:574.93px;font-size:10.00px;color:#a8a8a8;transform:scaleX(0.9850);">50</div>
<div class="track" style="left:708.26px;top:250px;height:378px"></div>
<svg class="kn" style="left:697.26px;top:480.48px" width="24" height="49"><use href="#knob"/></svg>
<div class="t" style="left:696.39px;top:215.52px;font-size:12.50px;color:#fff;transform:scaleX(0.9850);-webkit-text-stroke:0.2px #fff;">-24.0</div>
<div class="t" style="left:692.18px;top:227.89px;font-size:12.65px;color:#f2f2f2;transform:scaleX(0.9400);-webkit-text-stroke:0.25px #f2f2f2;">Drums</div>
<div class="t" style="left:691.72px;top:654.96px;font-size:12.80px;color:#fafafa;font-weight:bold;transform:scaleX(0.8950);">Bus 10</div>
<div class="mute" style="left:677.26px"></div>
<div class="t" style="left:683.14px;top:688.58px;font-size:24.13px;color:#e4e4e4;transform:scaleX(0.9435);">MUTE</div>
<div class="sep" style="left:824.90px;top:157px;height:580px"></div>
<div class="sep" style="left:824.90px;top:795px;height:5px"></div>
<div class="seg" style="left:811.40px;top:211.20px;background:#6d1711"></div>
<div class="seg" style="left:811.40px;top:233.97px;background:#6a3d13"></div>
<div class="seg" style="left:811.40px;top:256.74px;background:#6a3d13"></div>
<div class="seg" style="left:811.40px;top:279.51px;background:#6a3d13"></div>
<div class="seg" style="left:811.40px;top:302.28px;background:#6a3d13"></div>
<div class="seg" style="left:811.40px;top:325.05px;background:#6a3d13"></div>
<div class="seg" style="left:811.40px;top:347.82px;background:#6a3d13"></div>
<div class="seg" style="left:811.40px;top:370.59px;background:#6a3d13"></div>
<div class="seg" style="left:811.40px;top:393.36px;background:#6a3d13"></div>
<div class="seg" style="left:811.40px;top:416.13px;background:#6a3d13"></div>
<div class="seg" style="left:811.40px;top:438.90px;background:#6a3d13"></div>
<div class="seg" style="left:811.40px;top:461.67px;background:#2c3a13"></div>
<div class="seg" style="left:811.40px;top:484.44px;background:#2c3a13"></div>
<div class="seg" style="left:811.40px;top:507.21px;background:#2c3a13"></div>
<div class="seg" style="left:811.40px;top:529.98px;background:#2c3a13"></div>
<div class="seg" style="left:811.40px;top:552.75px;background:#2c3a13"></div>
<div class="seg" style="left:811.40px;top:575.52px;background:#2c3a13"></div>
<div class="seg" style="left:811.40px;top:598.29px;background:#2c3a13"></div>
<div class="seg" style="left:811.40px;top:621.06px;background:#b4271a"></div>
<div class="seg" style="left:811.40px;top:643.83px;background:#2c3a13"></div>
<div class="tick" style="left:771.40px;top:249.20px;width:32px;background:#858585"></div>
<div class="t" style="left:759.45px;top:244.34px;font-size:10.00px;color:#8a8a8a;transform:scaleX(0.9850);">10</div>
<div class="tick" style="left:771.40px;top:296.40px;width:32px;background:#8a8a8a"></div>
<div class="t" style="left:759.81px;top:291.54px;font-size:10.00px;color:#8a8a8a;transform:scaleX(0.9850);">5</div>
<div class="tick" style="left:771.40px;top:343.70px;width:32px;background:#e8e8e8"></div>
<div class="t" style="left:759.83px;top:338.83px;font-size:10.00px;color:#a8a8a8;transform:scaleX(0.9850);">0</div>
<div class="tick" style="left:771.40px;top:390.90px;width:32px;background:#c6c6c6"></div>
<div class="t" style="left:759.81px;top:386.04px;font-size:10.00px;color:#a8a8a8;transform:scaleX(0.9850);">5</div>
<div class="tick" style="left:771.40px;top:438.10px;width:32px;background:#a8a8a8"></div>
<div class="t" style="left:759.45px;top:433.24px;font-size:10.00px;color:#a8a8a8;transform:scaleX(0.9850);">10</div>
<div class="tick" style="left:771.40px;top:485.40px;width:32px;background:#989898"></div>
<div class="t" style="left:759.71px;top:480.54px;font-size:10.00px;color:#a8a8a8;transform:scaleX(0.9850);">20</div>
<div class="tick" style="left:771.40px;top:532.60px;width:32px;background:#a2a2a2"></div>
<div class="t" style="left:759.83px;top:527.73px;font-size:10.00px;color:#a8a8a8;transform:scaleX(0.9850);">30</div>
<div class="tick" style="left:771.40px;top:579.80px;width:32px;background:#a4a4a4"></div>
<div class="t" style="left:759.81px;top:574.93px;font-size:10.00px;color:#a8a8a8;transform:scaleX(0.9850);">50</div>
<div class="track" style="left:783.40px;top:250px;height:378px"></div>
<svg class="kn" style="left:772.40px;top:442.68px" width="24" height="49"><use href="#knob"/></svg>
<div class="t" style="left:771.53px;top:215.52px;font-size:12.50px;color:#fff;transform:scaleX(0.9850);-webkit-text-stroke:0.2px #fff;">-16.0</div>
<div class="t" style="left:767.77px;top:227.89px;font-size:12.65px;color:#f2f2f2;transform:scaleX(0.9400);-webkit-text-stroke:0.25px #f2f2f2;">Vocals</div>
<div class="t" style="left:767.12px;top:654.96px;font-size:12.80px;color:#fafafa;font-weight:bold;transform:scaleX(0.8950);">Bus 11</div>
<div class="mute" style="left:752.40px"></div>
<div class="t" style="left:758.28px;top:688.58px;font-size:24.13px;color:#e4e4e4;transform:scaleX(0.9435);">MUTE</div>
<div class="sep" style="left:900.04px;top:157px;height:643px"></div>
<div class="seg" style="left:886.54px;top:211.20px;background:#6d1711"></div>
<div class="seg" style="left:886.54px;top:233.97px;background:#6a3d13"></div>
<div class="seg" style="left:886.54px;top:256.74px;background:#6a3d13"></div>
<div class="seg" style="left:886.54px;top:279.51px;background:#6a3d13"></div>
<div class="seg" style="left:886.54px;top:302.28px;background:#6a3d13"></div>
<div class="seg" style="left:886.54px;top:325.05px;background:#6a3d13"></div>
<div class="seg" style="left:886.54px;top:347.82px;background:#6a3d13"></div>
<div class="seg" style="left:886.54px;top:370.59px;background:#6a3d13"></div>
<div class="seg" style="left:886.54px;top:393.36px;background:#6a3d13"></div>
<div class="seg" style="left:886.54px;top:416.13px;background:#6a3d13"></div>
<div class="seg" style="left:886.54px;top:438.90px;background:#6a3d13"></div>
<div class="seg" style="left:886.54px;top:461.67px;background:#2c3a13"></div>
<div class="seg" style="left:886.54px;top:484.44px;background:#2c3a13"></div>
<div class="seg" style="left:886.54px;top:507.21px;background:#2c3a13"></div>
<div class="seg" style="left:886.54px;top:529.98px;background:#2c3a13"></div>
<div class="seg" style="left:886.54px;top:552.75px;background:#2c3a13"></div>
<div class="seg" style="left:886.54px;top:575.52px;background:#2c3a13"></div>
<div class="seg" style="left:886.54px;top:598.29px;background:#2c3a13"></div>
<div class="seg" style="left:886.54px;top:621.06px;background:#b4271a"></div>
<div class="seg" style="left:886.54px;top:643.83px;background:#2c3a13"></div>
<div class="tick" style="left:846.54px;top:249.20px;width:32px;background:#858585"></div>
<div class="t" style="left:834.59px;top:244.34px;font-size:10.00px;color:#8a8a8a;transform:scaleX(0.9850);">10</div>
<div class="tick" style="left:846.54px;top:296.40px;width:32px;background:#8a8a8a"></div>
<div class="t" style="left:834.95px;top:291.54px;font-size:10.00px;color:#8a8a8a;transform:scaleX(0.9850);">5</div>
<div class="tick" style="left:846.54px;top:343.70px;width:32px;background:#e8e8e8"></div>
<div class="t" style="left:834.97px;top:338.83px;font-size:10.00px;color:#a8a8a8;transform:scaleX(0.9850);">0</div>
<div class="tick" style="left:846.54px;top:390.90px;width:32px;background:#c6c6c6"></div>
<div class="t" style="left:834.95px;top:386.04px;font-size:10.00px;color:#a8a8a8;transform:scaleX(0.9850);">5</div>
<div class="tick" style="left:846.54px;top:438.10px;width:32px;background:#a8a8a8"></div>
<div class="t" style="left:834.59px;top:433.24px;font-size:10.00px;color:#a8a8a8;transform:scaleX(0.9850);">10</div>
<div class="tick" style="left:846.54px;top:485.40px;width:32px;background:#989898"></div>
<div class="t" style="left:834.85px;top:480.54px;font-size:10.00px;color:#a8a8a8;transform:scaleX(0.9850);">20</div>
<div class="tick" style="left:846.54px;top:532.60px;width:32px;background:#a2a2a2"></div>
<div class="t" style="left:834.97px;top:527.73px;font-size:10.00px;color:#a8a8a8;transform:scaleX(0.9850);">30</div>
<div class="tick" style="left:846.54px;top:579.80px;width:32px;background:#a4a4a4"></div>
<div class="t" style="left:834.95px;top:574.93px;font-size:10.00px;color:#a8a8a8;transform:scaleX(0.9850);">50</div>
<div class="track" style="left:858.54px;top:250px;height:378px"></div>
<svg class="kn" style="left:847.54px;top:442.68px" width="24" height="49"><use href="#knob"/></svg>
<div class="t" style="left:846.67px;top:215.52px;font-size:12.50px;color:#fff;transform:scaleX(0.9850);-webkit-text-stroke:0.2px #fff;">-16.0</div>
<div class="t" style="left:842.91px;top:227.89px;font-size:12.65px;color:#f2f2f2;transform:scaleX(0.9400);-webkit-text-stroke:0.25px #f2f2f2;">Vocals</div>
<div class="t" style="left:842.00px;top:654.96px;font-size:12.80px;color:#fafafa;font-weight:bold;transform:scaleX(0.8950);">Bus 12</div>
<div class="mute" style="left:827.54px"></div>
<div class="t" style="left:833.42px;top:688.58px;font-size:24.13px;color:#e4e4e4;transform:scaleX(0.9435);">MUTE</div>
<div class="sep" style="left:975.18px;top:157px;height:580px"></div>
<div class="sep" style="left:975.18px;top:795px;height:5px"></div>
<div class="seg" style="left:961.68px;top:211.20px;background:#6d1711"></div>
<div class="seg" style="left:961.68px;top:233.97px;background:#6a3d13"></div>
<div class="seg" style="left:961.68px;top:256.74px;background:#6a3d13"></div>
<div class="seg" style="left:961.68px;top:279.51px;background:#6a3d13"></div>
<div class="seg" style="left:961.68px;top:302.28px;background:#6a3d13"></div>
<div class="seg" style="left:961.68px;top:325.05px;background:#6a3d13"></div>
<div class="seg" style="left:961.68px;top:347.82px;background:#6a3d13"></div>
<div class="seg" style="left:961.68px;top:370.59px;background:#6a3d13"></div>
<div class="seg" style="left:961.68px;top:393.36px;background:#6a3d13"></div>
<div class="seg" style="left:961.68px;top:416.13px;background:#6a3d13"></div>
<div class="seg" style="left:961.68px;top:438.90px;background:#6a3d13"></div>
<div class="seg" style="left:961.68px;top:461.67px;background:#2c3a13"></div>
<div class="seg" style="left:961.68px;top:484.44px;background:#2c3a13"></div>
<div class="seg" style="left:961.68px;top:507.21px;background:#2c3a13"></div>
<div class="seg" style="left:961.68px;top:529.98px;background:#2c3a13"></div>
<div class="seg" style="left:961.68px;top:552.75px;background:#2c3a13"></div>
<div class="seg" style="left:961.68px;top:575.52px;background:#2c3a13"></div>
<div class="seg" style="left:961.68px;top:598.29px;background:#2c3a13"></div>
<div class="seg" style="left:961.68px;top:621.06px;background:#b4271a"></div>
<div class="seg" style="left:961.68px;top:643.83px;background:#2c3a13"></div>
<div class="tick" style="left:921.68px;top:249.20px;width:32px;background:#858585"></div>
<div class="t" style="left:909.73px;top:244.34px;font-size:10.00px;color:#8a8a8a;transform:scaleX(0.9850);">10</div>
<div class="tick" style="left:921.68px;top:296.40px;width:32px;background:#8a8a8a"></div>
<div class="t" style="left:910.09px;top:291.54px;font-size:10.00px;color:#8a8a8a;transform:scaleX(0.9850);">5</div>
<div class="tick" style="left:921.68px;top:343.70px;width:32px;background:#e8e8e8"></div>
<div class="t" style="left:910.11px;top:338.83px;font-size:10.00px;color:#a8a8a8;transform:scaleX(0.9850);">0</div>
<div class="tick" style="left:921.68px;top:390.90px;width:32px;background:#c6c6c6"></div>
<div class="t" style="left:910.09px;top:386.04px;font-size:10.00px;color:#a8a8a8;transform:scaleX(0.9850);">5</div>
<div class="tick" style="left:921.68px;top:438.10px;width:32px;background:#a8a8a8"></div>
<div class="t" style="left:909.73px;top:433.24px;font-size:10.00px;color:#a8a8a8;transform:scaleX(0.9850);">10</div>
<div class="tick" style="left:921.68px;top:485.40px;width:32px;background:#989898"></div>
<div class="t" style="left:909.99px;top:480.54px;font-size:10.00px;color:#a8a8a8;transform:scaleX(0.9850);">20</div>
<div class="tick" style="left:921.68px;top:532.60px;width:32px;background:#a2a2a2"></div>
<div class="t" style="left:910.11px;top:527.73px;font-size:10.00px;color:#a8a8a8;transform:scaleX(0.9850);">30</div>
<div class="tick" style="left:921.68px;top:579.80px;width:32px;background:#a4a4a4"></div>
<div class="t" style="left:910.09px;top:574.93px;font-size:10.00px;color:#a8a8a8;transform:scaleX(0.9850);">50</div>
<div class="track" style="left:933.68px;top:250px;height:378px"></div>
<svg class="kn" style="left:922.68px;top:463.96px" width="24" height="49"><use href="#knob"/></svg>
<div class="t" style="left:921.83px;top:215.52px;font-size:12.50px;color:#fff;transform:scaleX(0.9850);-webkit-text-stroke:0.2px #fff;">-20.5</div>
<div class="t" style="left:923.62px;top:227.89px;font-size:12.65px;color:#f2f2f2;transform:scaleX(0.9400);-webkit-text-stroke:0.25px #f2f2f2;">Fx 1</div>
<div class="t" style="left:917.12px;top:654.96px;font-size:12.80px;color:#fafafa;font-weight:bold;transform:scaleX(0.8950);">Bus 13</div>
<div class="mute" style="left:902.68px"></div>
<div class="t" style="left:908.56px;top:688.58px;font-size:24.13px;color:#e4e4e4;transform:scaleX(0.9435);">MUTE</div>
<div class="sep" style="left:1050.32px;top:157px;height:643px"></div>
<div class="seg" style="left:1036.82px;top:211.20px;background:#6d1711"></div>
<div class="seg" style="left:1036.82px;top:233.97px;background:#6a3d13"></div>
<div class="seg" style="left:1036.82px;top:256.74px;background:#6a3d13"></div>
<div class="seg" style="left:1036.82px;top:279.51px;background:#6a3d13"></div>
<div class="seg" style="left:1036.82px;top:302.28px;background:#6a3d13"></div>
<div class="seg" style="left:1036.82px;top:325.05px;background:#6a3d13"></div>
<div class="seg" style="left:1036.82px;top:347.82px;background:#6a3d13"></div>
<div class="seg" style="left:1036.82px;top:370.59px;background:#6a3d13"></div>
<div class="seg" style="left:1036.82px;top:393.36px;background:#6a3d13"></div>
<div class="seg" style="left:1036.82px;top:416.13px;background:#6a3d13"></div>
<div class="seg" style="left:1036.82px;top:438.90px;background:#6a3d13"></div>
<div class="seg" style="left:1036.82px;top:461.67px;background:#2c3a13"></div>
<div class="seg" style="left:1036.82px;top:484.44px;background:#2c3a13"></div>
<div class="seg" style="left:1036.82px;top:507.21px;background:#2c3a13"></div>
<div class="seg" style="left:1036.82px;top:529.98px;background:#2c3a13"></div>
<div class="seg" style="left:1036.82px;top:552.75px;background:#2c3a13"></div>
<div class="seg" style="left:1036.82px;top:575.52px;background:#2c3a13"></div>
<div class="seg" style="left:1036.82px;top:598.29px;background:#2c3a13"></div>
<div class="seg" style="left:1036.82px;top:621.06px;background:#2c3a13"></div>
<div class="seg" style="left:1036.82px;top:643.83px;background:#b4271a"></div>
<div class="tick" style="left:996.82px;top:249.20px;width:32px;background:#858585"></div>
<div class="t" style="left:984.87px;top:244.34px;font-size:10.00px;color:#8a8a8a;transform:scaleX(0.9850);">10</div>
<div class="tick" style="left:996.82px;top:296.40px;width:32px;background:#8a8a8a"></div>
<div class="t" style="left:985.23px;top:291.54px;font-size:10.00px;color:#8a8a8a;transform:scaleX(0.9850);">5</div>
<div class="tick" style="left:996.82px;top:343.70px;width:32px;background:#e8e8e8"></div>
<div class="t" style="left:985.25px;top:338.83px;font-size:10.00px;color:#a8a8a8;transform:scaleX(0.9850);">0</div>
<div class="tick" style="left:996.82px;top:390.90px;width:32px;background:#c6c6c6"></div>
<div class="t" style="left:985.23px;top:386.04px;font-size:10.00px;color:#a8a8a8;transform:scaleX(0.9850);">5</div>
<div class="tick" style="left:996.82px;top:438.10px;width:32px;background:#a8a8a8"></div>
<div class="t" style="left:984.87px;top:433.24px;font-size:10.00px;color:#a8a8a8;transform:scaleX(0.9850);">10</div>
<div class="tick" style="left:996.82px;top:485.40px;width:32px;background:#989898"></div>
<div class="t" style="left:985.13px;top:480.54px;font-size:10.00px;color:#a8a8a8;transform:scaleX(0.9850);">20</div>
<div class="tick" style="left:996.82px;top:532.60px;width:32px;background:#a2a2a2"></div>
<div class="t" style="left:985.25px;top:527.73px;font-size:10.00px;color:#a8a8a8;transform:scaleX(0.9850);">30</div>
<div class="tick" style="left:996.82px;top:579.80px;width:32px;background:#a4a4a4"></div>
<div class="t" style="left:985.23px;top:574.93px;font-size:10.00px;color:#a8a8a8;transform:scaleX(0.9850);">50</div>
<div class="track" style="left:1008.82px;top:250px;height:378px"></div>
<svg class="kn" style="left:997.82px;top:603.00px" width="24" height="49"><use href="#knob"/></svg>
<svg style="left:1001.02px;top:216px" width="20" height="12" viewBox="0 0 20 12"><rect x="2.3" y="5.85" width="3.4" height="1.3" fill="#f0f0f0"/><ellipse cx="9.4" cy="6.65" rx="2.55" ry="3.05" fill="none" stroke="#f4f4f4" stroke-width="1.2"/><ellipse cx="15.4" cy="6.65" rx="2.55" ry="3.05" fill="none" stroke="#f4f4f4" stroke-width="1.2"/></svg>
<div class="t" style="left:998.77px;top:227.89px;font-size:12.65px;color:#f2f2f2;transform:scaleX(0.9400);-webkit-text-stroke:0.25px #f2f2f2;">Fx 2</div>
<div class="t" style="left:992.09px;top:654.96px;font-size:12.80px;color:#fafafa;font-weight:bold;transform:scaleX(0.8950);">Bus 14</div>
<div class="mute" style="left:977.82px"></div>
<div class="t" style="left:983.70px;top:688.58px;font-size:24.13px;color:#e4e4e4;transform:scaleX(0.9435);">MUTE</div>
<div class="sep" style="left:1125.46px;top:157px;height:580px"></div>
<div class="sep" style="left:1125.46px;top:795px;height:5px"></div>
<div class="seg" style="left:1111.96px;top:211.20px;background:#6d1711"></div>
<div class="seg" style="left:1111.96px;top:233.97px;background:#6a3d13"></div>
<div class="seg" style="left:1111.96px;top:256.74px;background:#6a3d13"></div>
<div class="seg" style="left:1111.96px;top:279.51px;background:#6a3d13"></div>
<div class="seg" style="left:1111.96px;top:302.28px;background:#6a3d13"></div>
<div class="seg" style="left:1111.96px;top:325.05px;background:#6a3d13"></div>
<div class="seg" style="left:1111.96px;top:347.82px;background:#6a3d13"></div>
<div class="seg" style="left:1111.96px;top:370.59px;background:#6a3d13"></div>
<div class="seg" style="left:1111.96px;top:393.36px;background:#6a3d13"></div>
<div class="seg" style="left:1111.96px;top:416.13px;background:#6a3d13"></div>
<div class="seg" style="left:1111.96px;top:438.90px;background:#6a3d13"></div>
<div class="seg" style="left:1111.96px;top:461.67px;background:#2c3a13"></div>
<div class="seg" style="left:1111.96px;top:484.44px;background:#2c3a13"></div>
<div class="seg" style="left:1111.96px;top:507.21px;background:#2c3a13"></div>
<div class="seg" style="left:1111.96px;top:529.98px;background:#2c3a13"></div>
<div class="seg" style="left:1111.96px;top:552.75px;background:#2c3a13"></div>
<div class="seg" style="left:1111.96px;top:575.52px;background:#2c3a13"></div>
<div class="seg" style="left:1111.96px;top:598.29px;background:#2c3a13"></div>
<div class="seg" style="left:1111.96px;top:621.06px;background:#2c3a13"></div>
<div class="seg" style="left:1111.96px;top:643.83px;background:#b4271a"></div>
<div class="tick" style="left:1071.96px;top:249.20px;width:32px;background:#858585"></div>
<div class="t" style="left:1060.01px;top:244.34px;font-size:10.00px;color:#8a8a8a;transform:scaleX(0.9850);">10</div>
<div class="tick" style="left:1071.96px;top:296.40px;width:32px;background:#8a8a8a"></div>
<div class="t" style="left:1060.37px;top:291.54px;font-size:10.00px;color:#8a8a8a;transform:scaleX(0.9850);">5</div>
<div class="tick" style="left:1071.96px;top:343.70px;width:32px;background:#e8e8e8"></div>
<div class="t" style="left:1060.39px;top:338.83px;font-size:10.00px;color:#a8a8a8;transform:scaleX(0.9850);">0</div>
<div class="tick" style="left:1071.96px;top:390.90px;width:32px;background:#c6c6c6"></div>
<div class="t" style="left:1060.37px;top:386.04px;font-size:10.00px;color:#a8a8a8;transform:scaleX(0.9850);">5</div>
<div class="tick" style="left:1071.96px;top:438.10px;width:32px;background:#a8a8a8"></div>
<div class="t" style="left:1060.01px;top:433.24px;font-size:10.00px;color:#a8a8a8;transform:scaleX(0.9850);">10</div>
<div class="tick" style="left:1071.96px;top:485.40px;width:32px;background:#989898"></div>
<div class="t" style="left:1060.27px;top:480.54px;font-size:10.00px;color:#a8a8a8;transform:scaleX(0.9850);">20</div>
<div class="tick" style="left:1071.96px;top:532.60px;width:32px;background:#a2a2a2"></div>
<div class="t" style="left:1060.39px;top:527.73px;font-size:10.00px;color:#a8a8a8;transform:scaleX(0.9850);">30</div>
<div class="tick" style="left:1071.96px;top:579.80px;width:32px;background:#a4a4a4"></div>
<div class="t" style="left:1060.37px;top:574.93px;font-size:10.00px;color:#a8a8a8;transform:scaleX(0.9850);">50</div>
<div class="track" style="left:1083.96px;top:250px;height:378px"></div>
<svg class="kn" style="left:1072.96px;top:603.00px" width="24" height="49"><use href="#knob"/></svg>
<svg style="left:1076.16px;top:216px" width="20" height="12" viewBox="0 0 20 12"><rect x="2.3" y="5.85" width="3.4" height="1.3" fill="#f0f0f0"/><ellipse cx="9.4" cy="6.65" rx="2.55" ry="3.05" fill="none" stroke="#f4f4f4" stroke-width="1.2"/><ellipse cx="15.4" cy="6.65" rx="2.55" ry="3.05" fill="none" stroke="#f4f4f4" stroke-width="1.2"/></svg>
<div class="t" style="left:1073.88px;top:227.89px;font-size:12.65px;color:#f2f2f2;transform:scaleX(0.9400);-webkit-text-stroke:0.25px #f2f2f2;">Fx 3</div>
<div class="t" style="left:1067.35px;top:654.96px;font-size:12.80px;color:#fafafa;font-weight:bold;transform:scaleX(0.8950);">Bus 15</div>
<div class="mute" style="left:1052.96px"></div>
<div class="t" style="left:1058.84px;top:688.58px;font-size:24.13px;color:#e4e4e4;transform:scaleX(0.9435);">MUTE</div>
<div class="seg" style="left:1187.10px;top:211.20px;background:#6d1711"></div>
<div class="seg" style="left:1187.10px;top:233.97px;background:#6a3d13"></div>
<div class="seg" style="left:1187.10px;top:256.74px;background:#6a3d13"></div>
<div class="seg" style="left:1187.10px;top:279.51px;background:#6a3d13"></div>
<div class="seg" style="left:1187.10px;top:302.28px;background:#6a3d13"></div>
<div class="seg" style="left:1187.10px;top:325.05px;background:#6a3d13"></div>
<div class="seg" style="left:1187.10px;top:347.82px;background:#6a3d13"></div>
<div class="seg" style="left:1187.10px;top:370.59px;background:#6a3d13"></div>
<div class="seg" style="left:1187.10px;top:393.36px;background:#6a3d13"></div>
<div class="seg" style="left:1187.10px;top:416.13px;background:#6a3d13"></div>
<div class="seg" style="left:1187.10px;top:438.90px;background:#6a3d13"></div>
<div class="seg" style="left:1187.10px;top:461.67px;background:#2c3a13"></div>
<div class="seg" style="left:1187.10px;top:484.44px;background:#2c3a13"></div>
<div class="seg" style="left:1187.10px;top:507.21px;background:#2c3a13"></div>
<div class="seg" style="left:1187.10px;top:529.98px;background:#2c3a13"></div>
<div class="seg" style="left:1187.10px;top:552.75px;background:#2c3a13"></div>
<div class="seg" style="left:1187.10px;top:575.52px;background:#2c3a13"></div>
<div class="seg" style="left:1187.10px;top:598.29px;background:#2c3a13"></div>
<div class="seg" style="left:1187.10px;top:621.06px;background:#2c3a13"></div>
<div class="seg" style="left:1187.10px;top:643.83px;background:#b4271a"></div>
<div class="tick" style="left:1147.10px;top:249.20px;width:32px;background:#858585"></div>
<div class="t" style="left:1135.15px;top:244.34px;font-size:10.00px;color:#8a8a8a;transform:scaleX(0.9850);">10</div>
<div class="tick" style="left:1147.10px;top:296.40px;width:32px;background:#8a8a8a"></div>
<div class="t" style="left:1135.51px;top:291.54px;font-size:10.00px;color:#8a8a8a;transform:scaleX(0.9850);">5</div>
<div class="tick" style="left:1147.10px;top:343.70px;width:32px;background:#e8e8e8"></div>
<div class="t" style="left:1135.53px;top:338.83px;font-size:10.00px;color:#a8a8a8;transform:scaleX(0.9850);">0</div>
<div class="tick" style="left:1147.10px;top:390.90px;width:32px;background:#c6c6c6"></div>
<div class="t" style="left:1135.51px;top:386.04px;font-size:10.00px;color:#a8a8a8;transform:scaleX(0.9850);">5</div>
<div class="tick" style="left:1147.10px;top:438.10px;width:32px;background:#a8a8a8"></div>
<div class="t" style="left:1135.15px;top:433.24px;font-size:10.00px;color:#a8a8a8;transform:scaleX(0.9850);">10</div>
<div class="tick" style="left:1147.10px;top:485.40px;width:32px;background:#989898"></div>
<div class="t" style="left:1135.41px;top:480.54px;font-size:10.00px;color:#a8a8a8;transform:scaleX(0.9850);">20</div>
<div class="tick" style="left:1147.10px;top:532.60px;width:32px;background:#a2a2a2"></div>
<div class="t" style="left:1135.53px;top:527.73px;font-size:10.00px;color:#a8a8a8;transform:scaleX(0.9850);">30</div>
<div class="tick" style="left:1147.10px;top:579.80px;width:32px;background:#a4a4a4"></div>
<div class="t" style="left:1135.51px;top:574.93px;font-size:10.00px;color:#a8a8a8;transform:scaleX(0.9850);">50</div>
<div class="track" style="left:1159.10px;top:250px;height:378px"></div>
<svg class="kn" style="left:1148.10px;top:603.00px" width="24" height="49"><use href="#knob"/></svg>
<svg style="left:1151.30px;top:216px" width="20" height="12" viewBox="0 0 20 12"><rect x="2.3" y="5.85" width="3.4" height="1.3" fill="#f0f0f0"/><ellipse cx="9.4" cy="6.65" rx="2.55" ry="3.05" fill="none" stroke="#f4f4f4" stroke-width="1.2"/><ellipse cx="15.4" cy="6.65" rx="2.55" ry="3.05" fill="none" stroke="#f4f4f4" stroke-width="1.2"/></svg>
<div class="t" style="left:1148.92px;top:227.89px;font-size:12.65px;color:#f2f2f2;transform:scaleX(0.9400);-webkit-text-stroke:0.25px #f2f2f2;">Fx 4</div>
<div class="t" style="left:1142.54px;top:654.96px;font-size:12.80px;color:#fafafa;font-weight:bold;transform:scaleX(0.8950);">Bus 16</div>
<div class="mute" style="left:1128.10px"></div>
<div class="t" style="left:1133.98px;top:688.58px;font-size:24.13px;color:#e4e4e4;transform:scaleX(0.9435);">MUTE</div>
<div class="pan" style="left:1.00px;width:145.48px"></div>
<div class="panbar" style="left:72.64px"></div>
<div class="pan" style="left:602.12px;width:145.48px"></div>
<div class="panbar" style="left:673.76px"></div>
<div class="pan" style="left:752.40px;width:145.48px"></div>
<div class="panbar" style="left:824.04px"></div>
<div class="post" style="left:1.00px"></div>
<div class="t" style="left:17.76px;top:752.75px;font-size:23.93px;color:#ececec;transform:scaleX(0.9362);">Post EQ</div>
<svg style="left:123.00px;top:751px" width="21" height="30" viewBox="0 0 21 30"><path d="M6.8 0H14.2V15H20.8L10.4 29.8L0 15H6.8Z" fill="#ececec"/></svg>
<div class="post" style="left:151.28px"></div>
<div class="t" style="left:168.04px;top:752.75px;font-size:23.93px;color:#ececec;transform:scaleX(0.9362);">Post EQ</div>
<svg style="left:273.28px;top:751px" width="21" height="30" viewBox="0 0 21 30"><path d="M6.8 0H14.2V15H20.8L10.4 29.8L0 15H6.8Z" fill="#ececec"/></svg>
<div class="post" style="left:301.56px"></div>
<div class="t" style="left:318.32px;top:752.75px;font-size:23.93px;color:#ececec;transform:scaleX(0.9362);">Post EQ</div>
<svg style="left:423.56px;top:751px" width="21" height="30" viewBox="0 0 21 30"><path d="M6.8 0H14.2V15H20.8L10.4 29.8L0 15H6.8Z" fill="#ececec"/></svg>
<div class="post" style="left:451.84px"></div>
<div class="t" style="left:468.60px;top:752.75px;font-size:23.93px;color:#ececec;transform:scaleX(0.9362);">Post EQ</div>
<svg style="left:573.84px;top:751px" width="21" height="30" viewBox="0 0 21 30"><path d="M6.8 0H14.2V15H20.8L10.4 29.8L0 15H6.8Z" fill="#ececec"/></svg>
<div class="post" style="left:602.12px"></div>
<div class="t" style="left:604.34px;top:754.06px;font-size:24.27px;color:#ececec;transform:scaleX(0.9424);">Post Fader</div>
<svg style="left:724.12px;top:751px" width="21" height="30" viewBox="0 0 21 30"><path d="M6.8 0H14.2V15H20.8L10.4 29.8L0 15H6.8Z" fill="#ececec"/></svg>
<div class="post" style="left:752.40px"></div>
<div class="t" style="left:754.62px;top:754.06px;font-size:24.27px;color:#ececec;transform:scaleX(0.9424);">Post Fader</div>
<svg style="left:874.40px;top:751px" width="21" height="30" viewBox="0 0 21 30"><path d="M6.8 0H14.2V15H20.8L10.4 29.8L0 15H6.8Z" fill="#ececec"/></svg>
<div class="post" style="left:902.68px"></div>
<div class="t" style="left:904.90px;top:754.06px;font-size:24.27px;color:#ececec;transform:scaleX(0.9424);">Post Fader</div>
<svg style="left:1024.68px;top:751px" width="21" height="30" viewBox="0 0 21 30"><path d="M6.8 0H14.2V15H20.8L10.4 29.8L0 15H6.8Z" fill="#ececec"/></svg>
<div class="post" style="left:1052.96px"></div>
<div class="t" style="left:1055.18px;top:754.06px;font-size:24.27px;color:#ececec;transform:scaleX(0.9424);">Post Fader</div>
<svg style="left:1174.96px;top:751px" width="21" height="30" viewBox="0 0 21 30"><path d="M6.8 0H14.2V15H20.8L10.4 29.8L0 15H6.8Z" fill="#ececec"/></svg>
<div class="abs" style="left:1203px;top:34px;width:77px;height:766px;background:#000"></div>
<svg style="left:0;top:0" width="1280" height="100" viewBox="0 0 1280 100"><path d="M1012.1 16H1032.9V18.2H1012.1Z" fill="#b2b2b2"/><path d="M1016.6 7H1019.3L1025.8 17.1L1019.3 27.1H1016.6L1020.6 17.1Z" fill="#b2b2b2"/><path d="M1011.8 13H1013.4L1015.6 17.1L1013.4 21.2H1011.8L1013.2 17.1Z" fill="#b2b2b2"/><g fill="none" stroke="#b2b2b2" stroke-width="2.3"><path d="M1047.01 14.21A16.95 16.95 0 0 1 1070.99 14.21"/><path d="M1050.69 17.89A11.75 11.75 0 0 1 1067.31 17.89"/><path d="M1054.09 21.29A6.95 6.95 0 0 1 1063.91 21.29"/></g><path d="M1056.9 22.9H1061.1L1059 25.9Z" fill="#b2b2b2"/><path fill-rule="evenodd" d="M1140 9H1168V25.1H1140ZM1142.1 11.1V23H1165.9V11.1Z" fill="#b2b2b2"/><path d="M1168 11.8H1170V22H1168Z" fill="#b2b2b2"/><path d="M1143.9 12.9H1164.1V21.1H1143.9Z" fill="#b2b2b2"/><path d="M1155.9 10L1148 17.4H1152.7L1151.9 24L1160.3 16.3H1155.2Z" fill="#000"/><path d="M12.7 53.6H16.3L10.4 64L16.6 74.4H12.9L6.5 64Z" fill="#9c9c9c"/><g fill="#d2d2d2"><path d="M886 48.5H899.7L902.3 54H923.7V58H891.5L888.6 68.2L886 79Z"/><path d="M891.8 58.2H929.8L923.8 79H886Z"/></g><path d="M923.8 57.3H891L888.2 68.3" fill="none" stroke="#1b1b1b" stroke-width="1.3"/><g fill="none" stroke="#d2d2d2" stroke-width="4.2"><path d="M1009 63.8H978"/><path d="M993 48.5L978 63.8L993 79.1"/><path d="M1142.8 63.8H1174"/><path d="M1159 48.5L1174 63.8L1159 79.1"/></g><g fill="#d2d2d2"><rect x="1062" y="45.8" width="7.8" height="7.2"/><rect x="1072" y="45.8" width="7.8" height="7.2"/><rect x="1082" y="45.8" width="7.8" height="7.2"/><rect x="1062" y="55.6" width="7.8" height="7.2"/><rect x="1072" y="55.6" width="7.8" height="7.2"/><rect x="1082" y="55.6" width="7.8" height="7.2"/><rect x="1062" y="65.1" width="7.8" height="7.2"/><rect x="1072" y="65.1" width="7.8" height="7.2"/><rect x="1082" y="65.1" width="7.8" height="7.2"/><rect x="1072" y="75" width="7.8" height="7.2"/></g></svg>
<svg style="left:21px;top:42px" width="44" height="44" viewBox="0 0 44 44"><rect x="1.4" y="1.5" width="41.4" height="41.8" rx="1.5" fill="#2a2733" stroke="#1799b6" stroke-width="1.4"/><g fill="#15151a"><rect x="6" y="11" width="2.2" height="24"/><rect x="19.3" y="11" width="2.2" height="24"/><rect x="33" y="11" width="2.2" height="24"/></g><g stroke-dasharray="1 0.8" stroke-width="1.6"><path d="M11.2 11V23.5" stroke="#d9a520"/><path d="M11.2 23.5V40" stroke="#6ccf1f"/><path d="M24.5 11V23.5" stroke="#d9a520"/><path d="M24.5 23.5V40" stroke="#6ccf1f"/><path d="M38.3 11V23.5" stroke="#d9a520"/><path d="M38.3 23.5V40" stroke="#6ccf1f"/></g><rect x="18" y="25" width="4" height="5.8" fill="#e8e8e8"/><rect x="32" y="22" width="4" height="6" fill="#e8e8e8"/><path d="M9 5.1H42.5V10.6H9A2.75 2.75 0 0 1 9 5.1Z" fill="#1a8ea8"/><path d="M1 16.2H18.5A3.9 3.9 0 0 1 18.5 24H1Z" fill="#1a8ea8"/><text x="25.7" y="9.6" font-size="4.6" fill="#cfe9ef" text-anchor="middle" font-family="Liberation Sans">Mixing Station</text><text x="10.5" y="23.2" font-size="8" fill="#d8eef3" text-anchor="middle" font-family="Liberation Sans">X32</text></svg>
<svg style="left:1200px;top:300px" width="80" height="500" viewBox="1200 300 80 500"><circle cx="1238" cy="348.9" r="10.95" fill="none" stroke="#a9a9a9" stroke-width="4.1"/><path d="M1246.5 357.6L1255.2 366.2" stroke="#a9a9a9" stroke-width="4.3" stroke-linecap="round"/><path d="M1225 448L1236.6 435.3Q1238.5 434 1240 436V442H1255Q1257 442 1257 444V452Q1257 454 1255 454H1240V460Q1238.5 462 1236.6 460.7Z" fill="#a9a9a9"/><path d="M1227 749.4L1240.9 735.6L1254.9 749.4" fill="none" stroke="#acacac" stroke-width="2.8" stroke-linecap="round" stroke-linejoin="miter"/><path d="M1230 751.9L1240.9 740.9L1251.9 751.9V761.75H1244.1V754.3Q1244.1 752.8 1242.6 752.8H1239.5Q1238 752.8 1238 754.3V761.75H1230Z" fill="#acacac"/></svg>
</body></html>
